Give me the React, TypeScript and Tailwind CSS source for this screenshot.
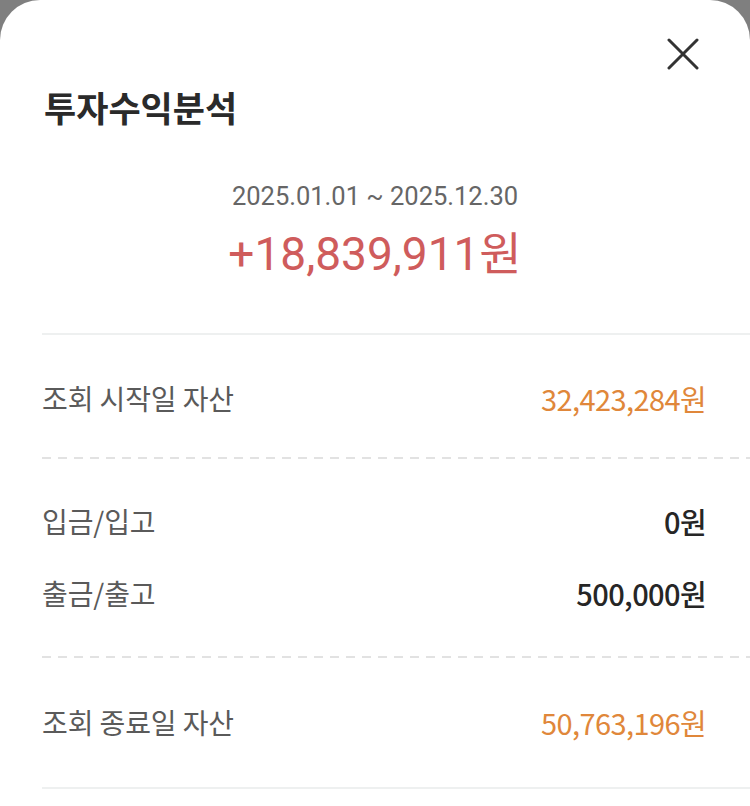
const font = { fontFamily: '"Noto Sans CJK KR", Roboto, sans-serif' };
const numFont = { fontFamily: 'Roboto, "Noto Sans CJK KR", sans-serif' };

function Row({ label, value, tone }: { label: string; value: string; tone: 'orange' | 'dark' }) {
  return (
    <div className="flex items-center justify-between pr-[44px] h-[36px]">
      <span className="text-[28px] leading-[36px] text-[#5a5a5a] tracking-[-0.1px]">{label}</span>
      <span
        className={
          tone === 'orange'
            ? 'text-[29px] leading-[36px] text-[#e0873a] tracking-[-0.6px]'
            : 'text-[29px] leading-[36px] text-[#262626] font-medium tracking-[-0.6px]'
        }
      >
        {value}
      </span>
    </div>
  );
}

function Dashed({ className }: { className: string }) {
  return (
    <div
      className={
        'h-[2px] bg-[repeating-linear-gradient(to_right,#e2e2e2_0_9px,transparent_9px_16px)] ' + className
      }
    />
  );
}

export default function App() {
  return (
    <div className="h-[806px] w-[750px] bg-[#7f7f7f] overflow-hidden" style={font}>
      <div className="relative h-full bg-white rounded-t-[40px]">
        {/* close */}
        <button className="absolute top-[38px] right-[51px] w-[32px] h-[32px]">
          <svg viewBox="0 0 32 32" width="32" height="32" fill="none" stroke="#333" strokeWidth="3" strokeLinecap="round">
            <path d="M2 2 L30 30 M30 2 L2 30" />
          </svg>
        </button>

        <div className="pl-[44px] pt-[86px]">
          <h1 className="text-[35px] leading-[42px] font-bold text-[#2a2a2a]">투자수익분석</h1>
        </div>

        {/* summary */}
        <div className="text-center">
          <p className="mt-[53px] text-[25.5px] leading-[30px] text-[#666]" style={numFont}>
            2025.01.01 ~ 2025.12.30
          </p>
          <p className="mt-[16px] text-[46px] leading-[54px] text-[#cf5c5c]" style={numFont}>
            +18,839,911원
          </p>
        </div>

        <div className="pl-[42px]">
          <div className="mt-[52px] h-[2px] bg-[#eef0f0]" />
          <div className="mt-[45px]">
            <Row label="조회 시작일 자산" value="32,423,284원" tone="orange" />
          </div>
          <Dashed className="mt-[41px]" />
          <div className="mt-[44px] flex flex-col gap-[36px]">
            <Row label="입금/입고" value="0원" tone="dark" />
            <Row label="출금/출고" value="500,000원" tone="dark" />
          </div>
          <Dashed className="mt-[45px]" />
          <div className="mt-[46px]">
            <Row label="조회 종료일 자산" value="50,763,196원" tone="orange" />
          </div>
          <div className="mt-[47px] h-[2px] bg-[#eef0f0]" />
        </div>
      </div>
    </div>
  );
}
